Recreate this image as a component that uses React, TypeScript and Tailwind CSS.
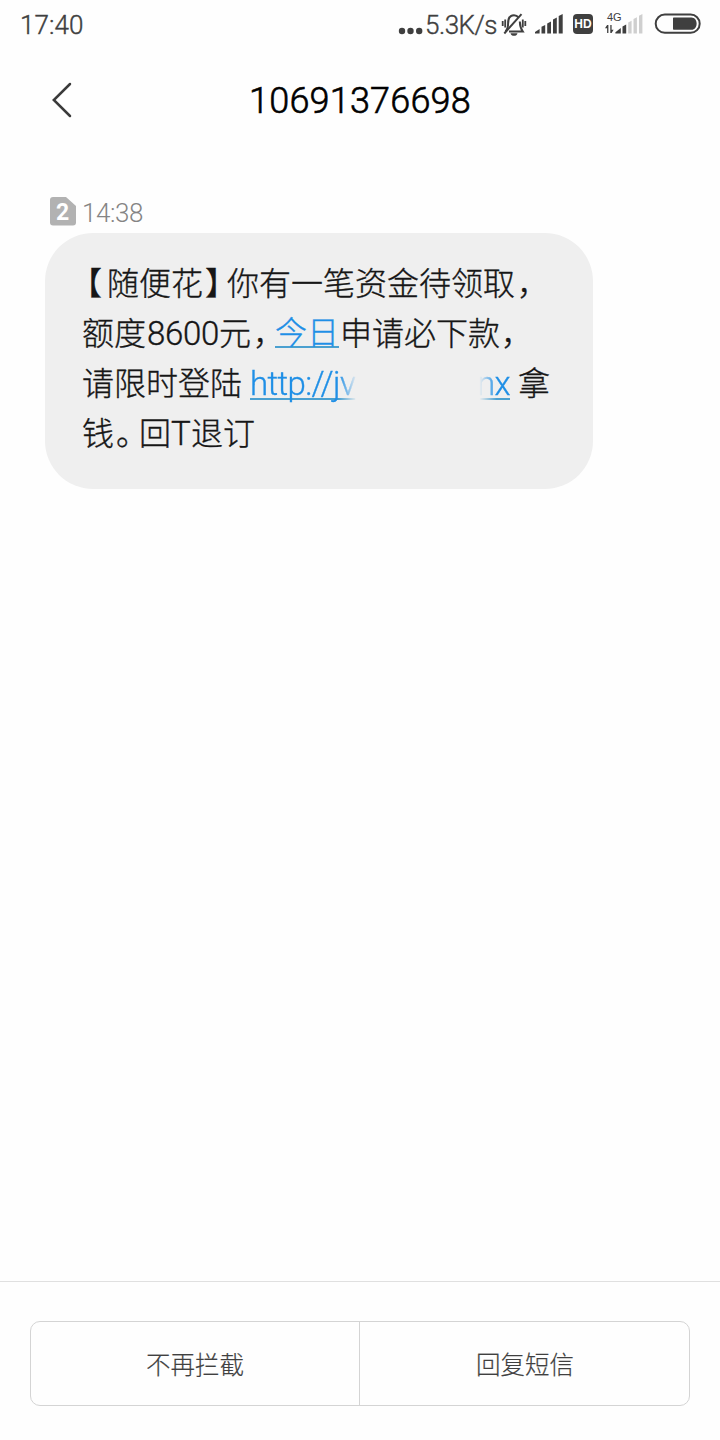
import { ReactNode } from 'react'

interface GlyphProps {
  children: ReactNode
  className?: string
}

// Punctuation is set narrower than a full em square
function Punct({ children, className = 'pl-px' }: GlyphProps) {
  return (
    <span className={`flex w-6 shrink-0 [font-feature-settings:'halt'] ${className}`}>
      {children}
    </span>
  )
}

function Line({ children }: { children: ReactNode }) {
  return <div className="flex h-[50px] items-center whitespace-pre">{children}</div>
}

function MutedBell() {
  return (
    <svg width="26" height="24" viewBox="0 0 26 24" fill="none" stroke="#3f3f3f" strokeWidth="2">
      <path d="M4.5 18.2C6.6 16.4 7.1 14 7.1 10.5C7.1 5 9.5 2.2 13 2.2C14.9 2.2 16.4 3 17.4 4.4" />
      <path d="M18.8 8.5C18.9 13 19.3 15 21.8 18.6H8" />
      <path d="M3.3 20.5L20.5 1.2" />
      <path d="M4.2 6.5V14.5M1.7 8V13M21.8 6.5V14.5M24.3 8V13" strokeWidth="1.8" />
      <path d="M9.5 20.3H16.5C16 22.3 14.8 22.8 13 22.8S10 22.3 9.5 20.3Z" fill="#3f3f3f" stroke="none" />
    </svg>
  )
}

function Signal() {
  return (
    <svg width="28" height="20" viewBox="0 0 28 20" fill="#3f3f3f">
      <path d="M0 19.5V18L4.6 15V19.5Z" />
      <path d="M6.5 19.5V12.8L10.2 11V19.5Z" />
      <path d="M12.2 19.5V9.5L16 7.5V19.5Z" />
      <path d="M18 19.5V5.5L21.8 3.5V19.5Z" />
      <path d="M23.7 19.5V2L27.7 0V19.5Z" />
    </svg>
  )
}

function WeakSignal() {
  return (
    <svg width="38" height="20" viewBox="0 0 38 20" fill="#3f3f3f">
      <path d="M2.1 19V11L0 14.2H2.1V19H3.4V11H2.1ZM5.3 11V19H6.6L8.6 15.8H6.6V11Z" />
      <path d="M10.4 19.5V18.3L15.8 14V19.5Z" />
      <path d="M17.5 19.5V12.5L21.2 10.5V19.5Z" />
      <path d="M23.2 19.5V8.5L26.6 6.7V19.5ZM28.5 19.5V5L31.9 3.3V19.5ZM34 19.5V1.8L37.4 0V19.5Z" fill="#cfcfcf" />
    </svg>
  )
}

function Battery() {
  return (
    <svg width="48" height="22" viewBox="0 0 48 22" fill="none">
      <rect x="1.7" y="1.6" width="44" height="18.2" rx="9.1" stroke="#3f3f3f" strokeWidth="2" />
      <path d="M20 4.6H37.5C40.7 4.6 42.6 7.5 42.6 10.7S40.7 16.8 37.5 16.8H20C19.3 16.8 19 16.5 19 15.8V5.6C19 4.9 19.3 4.6 20 4.6Z" fill="#3f3f3f" />
    </svg>
  )
}

function StatusBar() {
  return (
    <div className="flex h-[50px] items-center pl-5 text-[#3f3f3f]">
      <span className="w-[378px] pt-px font-['Roboto'] text-[26px] font-light tracking-[0.1px] [-webkit-text-stroke:0.4px]">17:40</span>
      <svg className="mt-[11px]" width="27" height="8" viewBox="0 0 27 8" fill="#3f3f3f">
        <circle cx="4" cy="4" r="3.2" />
        <circle cx="12.5" cy="4" r="3.2" />
        <circle cx="21.2" cy="4" r="3.2" />
      </svg>
      <span className="w-[76px] font-['Roboto'] text-[26px] font-light tracking-[-0.5px] [-webkit-text-stroke:0.4px]">5.3K/s</span>
      <div className="-mt-px"><MutedBell /></div>
      <div className="ml-2 -mt-[2px]"><Signal /></div>
      <span className="ml-[10px] -mt-[2px] flex h-5 w-5 items-center justify-center rounded-[4px] bg-[#3f3f3f] font-['Liberation_Sans'] text-[12px] font-bold text-white">
        HD
      </span>
      <div className="relative ml-3 -mt-[2px] h-5">
        <WeakSignal />
        <span className="absolute -top-[4px] left-[2px] font-['Liberation_Sans'] text-[11px] leading-[14px]">4G</span>
      </div>
      <div className="ml-[11px] -mt-[2px]"><Battery /></div>
    </div>
  )
}

function Header() {
  return (
    <div className="grid h-[100px] grid-cols-[100px_1fr_100px] items-center">
      <svg className="ml-[51px]" width="22" height="36" viewBox="0 0 22 36" fill="none" stroke="#3a3a3a" strokeWidth="2.5">
        <path d="M19 2L2.8 18L19 34" strokeLinecap="round" />
      </svg>
      <h1 className="pt-[2px] text-center font-['Roboto'] text-[36px] font-light tracking-[0.2px] text-black [-webkit-text-stroke:0.6px]">10691376698</h1>
    </div>
  )
}

function Meta() {
  return (
    <div className="flex h-[30px] items-center pl-[50px]">
      <svg width="26" height="30" viewBox="0 0 26 30">
        <path d="M3 0H16L26 9V25.5C26 27.5 25 28.5 23 28.5H3C1 28.5 0 27.5 0 25.5V3C0 1 1 0 3 0Z" fill="#b2b2b2" />
        <text x="12.6" y="23" textAnchor="middle" fill="#fff" fontFamily="Roboto" fontSize="23" fontWeight="700">2</text>
      </svg>
      <span className="ml-[6px] pt-[3px] font-['Roboto'] text-[26px] font-light tracking-[-0.4px] text-[#848484]">14:38</span>
    </div>
  )
}

function Message() {
  return (
    <div className="ml-[45px] mt-[6px] h-[256px] w-[548px] rounded-[48px] bg-[#efefef] pl-[37px] pt-[23px] text-[32px] font-light text-[#161616] [-webkit-text-stroke:0.35px]">
      <Line>
        <Punct className="mr-px pl-1">【</Punct>
        随便花
        <Punct className="pl-[2px]">】</Punct>
        你有一笔资金待领取
        <Punct className="pl-[2px]">，</Punct>
      </Line>
      <Line>
        额度
        <span className="mt-[6px] w-[73px] pl-px font-['Roboto'] text-[33px] tracking-[-0.3px]">8600</span>
        元
        <Punct className="pl-[2px]">，</Punct>
        <a className="border-b-2 border-[#4aa0d0] leading-[32px] text-[#1f8fe6]">今日</a>
        <span className="ml-px">申请必下款</span>
        <Punct className="pl-px">，</Punct>
      </Line>
      <Line>
        请限时登陆
        <a className="ml-2 mt-[6px] flex w-[260px] justify-between font-['Roboto'] text-[33px] leading-[50px] tracking-[-0.6px] text-[#1f8fe6]">
          <span className="w-[107px] underline decoration-[#4aa0d0] decoration-2 underline-offset-[3px] [text-decoration-skip-ink:none] mask-[linear-gradient(to_right,black_83%,transparent)]">http://jv</span>
          <span className="flex w-[34px] justify-end underline decoration-[#4aa0d0] decoration-2 underline-offset-[3px] mask-[linear-gradient(to_right,transparent_10%,black_60%)]">nx</span>
        </a>
        <span className="ml-2">拿</span>
      </Line>
      <Line>
        钱
        <Punct className="pl-[2px]">。</Punct>
        <span className="pl-px">回</span>
        <span className="mt-[6px] w-5 font-['Roboto'] text-[33px]">T</span>
        退订
      </Line>
    </div>
  )
}

function Actions() {
  return (
    <div className="mt-auto h-[159px] border-t border-[#e0e0e0] px-[30px] pt-[39px]">
      <div className="flex h-[85px] rounded-[10px] border border-[#d4d4d4] text-[24.5px] font-light text-[#404040] [-webkit-text-stroke:0.2px]">
        <button className="w-[329px] border-r border-[#d4d4d4] pt-[2px]">不再拦截</button>
        <button className="flex-1 pt-[2px] pl-px">回复短信</button>
      </div>
    </div>
  )
}

export default function App() {
  return (
    <div className="flex h-[1440px] w-[720px] flex-col overflow-hidden bg-[#fefefe] font-['Noto_Sans_CJK_SC',sans-serif]">
      <StatusBar />
      <Header />
      <div className="mt-[47px]">
        <Meta />
        <Message />
      </div>
      <Actions />
    </div>
  )
}
